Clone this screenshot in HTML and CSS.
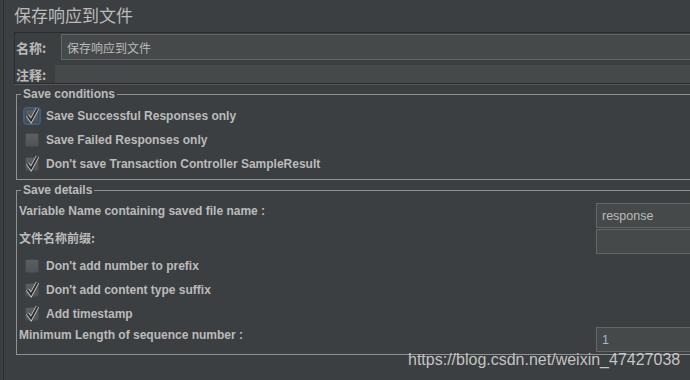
FILE: index.html
```html
<!DOCTYPE html>
<html lang="zh">
  <head>
    <meta charset="UTF-8" />
    <meta name="viewport" content="width=device-width, initial-scale=1.0" />
    <title>保存响应到文件</title>
    <link rel="stylesheet" href="styles.css">
  </head>
  <body>
    <div class="page">
      <div class="title">保存响应到文件</div>

      <div class="name-panel">
        <div class="name-row">
          <label class="cn-label">名称:</label>
          <input class="text-input name-input" type="text" value="保存响应到文件" readonly />
        </div>
        <div class="comment-row">
          <label class="cn-label">注释:</label>
          <input class="comment-input" type="text" value="" readonly />
        </div>
      </div>

      <fieldset class="group conditions">
        <legend>Save conditions</legend>
        <div class="check-row">
          <span class="box focused"><svg viewBox="0 0 14 14"><path class="tick-back" d="M2.5 6.5 L6 11.5 L12.5 -0.5"/><path class="tick" d="M2.5 6.5 L6 11.5 L12.5 -0.5"/></svg></span>
          Save Successful Responses only
        </div>
        <div class="check-row">
          <span class="box"></span>
          Save Failed Responses only
        </div>
        <div class="check-row">
          <span class="box"><svg viewBox="0 0 14 14"><path class="tick-back" d="M2.5 6.5 L6 11.5 L12.5 -0.5"/><path class="tick" d="M2.5 6.5 L6 11.5 L12.5 -0.5"/></svg></span>
          Don't save Transaction Controller SampleResult
        </div>
      </fieldset>

      <fieldset class="group details">
        <legend>Save details</legend>
        <div class="field-row">
          <span class="field-label">Variable Name containing saved file name :</span>
          <input class="text-input" type="text" value="response" readonly />
        </div>
        <div class="field-row">
          <span class="field-label cn-label">文件名称前缀:</span>
          <input class="text-input" type="text" value="" readonly />
        </div>
        <div class="check-row">
          <span class="box"></span>
          Don't add number to prefix
        </div>
        <div class="check-row">
          <span class="box"><svg viewBox="0 0 14 14"><path class="tick-back" d="M2.5 6.5 L6 11.5 L12.5 -0.5"/><path class="tick" d="M2.5 6.5 L6 11.5 L12.5 -0.5"/></svg></span>
          Don't add content type suffix
        </div>
        <div class="check-row">
          <span class="box"><svg viewBox="0 0 14 14"><path class="tick-back" d="M2.5 6.5 L6 11.5 L12.5 -0.5"/><path class="tick" d="M2.5 6.5 L6 11.5 L12.5 -0.5"/></svg></span>
          Add timestamp
        </div>
        <div class="field-row last">
          <span class="field-label">Minimum Length of sequence number :</span>
          <input class="text-input number" type="text" value="1" readonly />
        </div>
      </fieldset>
    </div>

    <div class="watermark">https://blog.csdn.net/weixin_47427038</div>
  </body>
</html>
```

FILE: styles.css
```css
html,
body {
  margin: 0;
  height: 100%;
  overflow: hidden;
  background-color: #3c3f41;
}
body {
  position: relative;
  font-family: "Liberation Sans", "Noto Sans CJK SC", sans-serif;
  color: #bbbbbb;
}
.page {
  height: 380px;
  margin-left: 3px;
  border-left: 1px solid #2d2f31;
}
.title {
  height: 32px;
  padding-left: 10px;
  font-family: "Noto Sans CJK SC", sans-serif;
  font-size: 17px;
  line-height: 30px;
}
.name-panel {
  margin-left: 10px;
  padding-top: 1px;
  border: 1px solid #2b2b2b;
  border-right: none;
  box-shadow: 0 1px 0 #555759;
}
.name-row {
  display: grid;
  grid-template-columns: 46px 1fr;
  align-items: center;
}
.comment-row {
  display: grid;
  grid-template-columns: 40px 1fr;
  align-items: center;
  margin-top: 5px;
}
.cn-label {
  padding-left: 1px;
  font-family: "Noto Sans CJK SC", sans-serif;
  font-size: 13px;
  font-weight: bold;
  line-height: 15px;
}
.text-input {
  box-sizing: border-box;
  width: 100%;
  height: 25px;
  margin: 0;
  padding: 0 5px;
  border: 1px solid #646566;
  border-right: none;
  background-color: #45494a;
  color: #bbbbbb;
  font-family: "Liberation Sans", "Noto Sans CJK SC", sans-serif;
  font-size: 12.5px;
  outline: none;
}
.name-input {
  height: 26px;
  font-size: 12px;
}
.comment-input {
  box-sizing: border-box;
  width: 100%;
  height: 18px;
  margin: 0;
  border: none;
  background-color: #45494a;
  outline: none;
}
.group {
  margin: 3px 0 0 12px;
  padding: 0 0 3px 0;
  border: 1px solid #8f9193;
  border-right: none;
  min-inline-size: 0;
}
.group legend {
  margin-left: 4px;
  padding: 0 2px;
  font-size: 12px;
  font-weight: bold;
  line-height: 15px;
}
.conditions {
  padding-top: 2px;
}
.details {
  padding-top: 5px;
  padding-bottom: 2px;
}
.check-row {
  display: flex;
  align-items: center;
  height: 24px;
  padding-left: 8px;
  font-size: 12px;
  font-weight: bold;
}
.box {
  box-sizing: border-box;
  width: 14px;
  height: 14px;
  margin-right: 7px;
  border: 1px solid #45484a;
  border-radius: 2px;
  background: linear-gradient(#5c5f61, #505355);
}
.box.focused {
  box-shadow: 0 0 0 1px #3b5f83, 0 0 0 2px rgba(74, 120, 170, 0.55);
}
.box svg {
  display: block;
  width: 14px;
  height: 14px;
  margin: -1px 0 0 -1px;
  overflow: visible;
}
.tick-back {
  fill: none;
  stroke: #c8c8c8;
  stroke-width: 3.6;
}
.tick {
  fill: none;
  stroke: #2a2b2c;
  stroke-width: 1.9;
}
.field-row {
  display: grid;
  grid-template-columns: 579px 1fr;
}
.field-row + .field-row,
.field-row.last {
  margin-top: 1px;
}
.field-label {
  padding: 1px 0 0 2px;
  font-size: 12px;
  font-weight: bold;
  line-height: 15px;
}
.number {
  color: #9fb6d0;
}
.watermark {
  position: absolute;
  left: 408px;
  top: 352px;
  font-family: "Liberation Sans", sans-serif;
  font-size: 16px;
  line-height: 16px;
  color: rgba(222, 222, 222, 0.85);
}
```
